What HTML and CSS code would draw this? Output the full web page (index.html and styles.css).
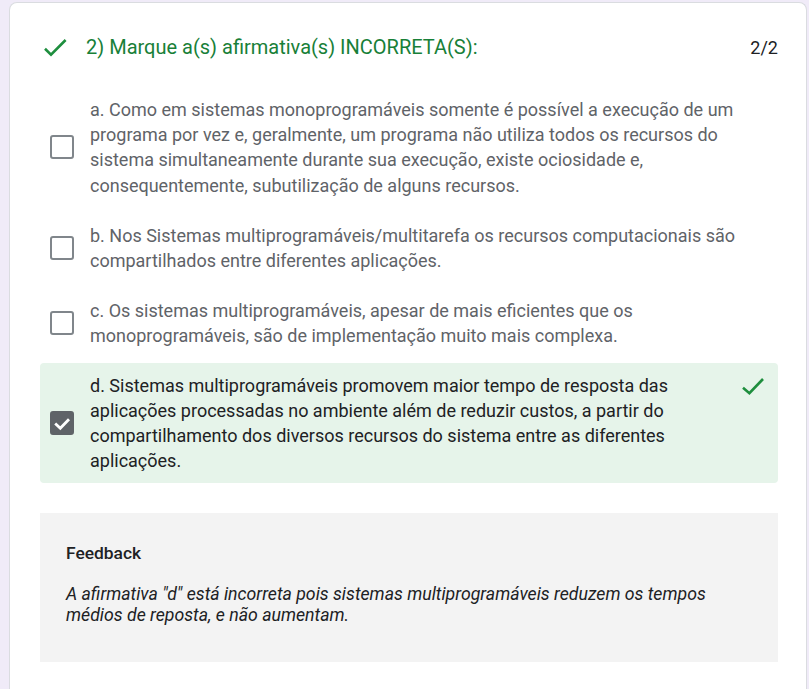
FILE: index.html
```html
<!DOCTYPE html>
<html lang="pt">
<head>
<meta charset="utf-8">
<link rel="stylesheet" href="styles.css">
</head>
<body>
<div class="page">
  <div class="card">
    <div class="header">
      <svg class="icon check-green" viewBox="0 0 28 24"><polyline points="5,13.8 11,19.6 25.6,5"/></svg>
      <div class="title">2) Marque a(s) afirmativa(s) INCORRETA(S):</div>
      <div class="score">2/2</div>
    </div>
    <div class="options">
      <div class="option">
        <div class="box"></div>
        <div class="text">a. Como em sistemas monoprogramáveis somente é possível a execução de um programa por vez e, geralmente, um programa não utiliza todos os recursos do sistema simultaneamente durante sua execução, existe ociosidade e, consequentemente, subutilização de alguns recursos.</div>
      </div>
      <div class="option">
        <div class="box"></div>
        <div class="text">b. Nos Sistemas multiprogramáveis/multitarefa os recursos computacionais são compartilhados entre diferentes aplicações.</div>
      </div>
      <div class="option">
        <div class="box"></div>
        <div class="text">c. Os sistemas multiprogramáveis, apesar de mais eficientes que os monoprogramáveis, são de implementação muito mais complexa.</div>
      </div>
      <div class="option correct">
        <div class="box checked">
          <svg viewBox="0 0 20 20"><polyline points="3.2,10.4 8.3,15.2 17,6.2"/></svg>
        </div>
        <div class="text">d. Sistemas multiprogramáveis promovem maior tempo de resposta das aplicações processadas no ambiente além de reduzir custos, a partir do compartilhamento dos diversos recursos do sistema entre as diferentes aplicações.</div>
        <svg class="mark check-green" viewBox="0 0 26 24"><polyline points="5,13.8 11.4,19.2 25,5"/></svg>
      </div>
    </div>
    <div class="feedback">
      <div class="fb-title">Feedback</div>
      <div class="fb-text">A afirmativa "d" está incorreta pois sistemas multiprogramáveis reduzem os tempos médios de reposta, e não aumentam.</div>
    </div>
  </div>
</div>
</body>
</html>
```
FILE: styles.css
```css
html, body {
  margin: 0;
  padding: 0;
  background: #f0ebf8;
  font-family: Roboto, "Liberation Sans", sans-serif;
}
.page {
  padding: 2px 2px 0 9px;
}
.card {
  background: #fff;
  border: 1px solid #dadce0;
  border-bottom: none;
  border-radius: 8px 8px 0 0;
  padding: 24px 28px 40px 30px;
  min-height: 700px;
}
.header {
  display: flex;
  align-items: center;
  height: 40px;
}
.icon {
  width: 28px;
  height: 24px;
  flex: none;
}
.check-green polyline {
  fill: none;
  stroke: #1e8e3e;
  stroke-width: 2.6;
}
.title {
  margin-left: 18px;
  flex: 1;
  font-size: 20px;
  color: #188038;
}
.score {
  font-size: 18px;
  color: #202124;
}
.options {
  margin-top: 20px;
  display: flex;
  flex-direction: column;
  gap: 5px;
}
.option {
  display: flex;
  align-items: center;
  padding: 10px 15px 10px 10px;
  border-radius: 4px;
}
.box {
  width: 20px;
  height: 20px;
  border: 2px solid #80868b;
  border-radius: 3px;
  flex: none;
  display: flex;
  align-items: center;
  justify-content: center;
}
.box.checked {
  background: #5f6368;
  border-color: #5f6368;
}
.box svg {
  width: 20px;
  height: 20px;
  flex: none;
}
.box svg polyline {
  fill: none;
  stroke: #fff;
  stroke-width: 2.8;
}
.text {
  flex: 1;
  margin-left: 16px;
  font-size: 18px;
  line-height: 25.2px;
  color: #5f6368;
}
.correct {
  background: #e6f4ea;
  margin-top: -1px;
  padding-right: 14px;
}
.correct .text {
  color: #202124;
}
.mark {
  width: 26px;
  height: 24px;
  flex: none;
  align-self: flex-start;
  margin-top: 1px;
  margin-left: 12px;
}
.feedback {
  margin-top: 30px;
  background: #f3f3f3;
  padding: 30px 26px 36px;
}
.fb-title {
  font-size: 17.4px;
  font-weight: 500;
  line-height: 20px;
  color: #202124;
}
.fb-text {
  margin-top: 21px;
  font-size: 17.7px;
  line-height: 21px;
  font-style: italic;
  color: #202124;
}
```
